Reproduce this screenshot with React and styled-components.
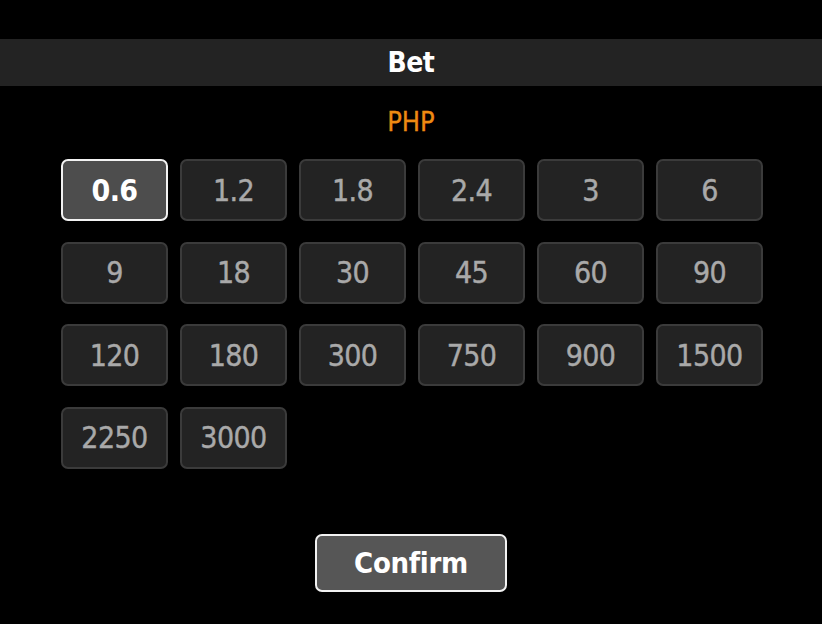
import React, { useState } from 'react';
import styled, { createGlobalStyle } from 'styled-components';

const GlobalStyle = createGlobalStyle`
  html, body {
    margin: 0;
    padding: 0;
    background: #000;
  }
  body {
    font-family: "DejaVu Sans Condensed", "DejaVu Sans", sans-serif;
  }
`;

const bets = ['0.6', '1.2', '1.8', '2.4', '3', '6', '9', '18', '30', '45', '60', '90', '120', '180', '300', '750', '900', '1500', '2250', '3000'];

const Page = styled.div`
  width: 822px;
  height: 624px;
  background: #000;
  padding-top: 39px;
  box-sizing: border-box;
  display: flex;
  flex-direction: column;
`;

const Header = styled.div`
  height: 47px;
  background: #232323;
  display: flex;
  align-items: center;
  justify-content: center;
  color: #fff;
  font-size: 28px;
  letter-spacing: -0.5px;
  font-weight: bold;
`;

const Currency = styled.div`
  margin-top: 20px;
  height: 30px;
  display: flex;
  align-items: center;
  justify-content: center;
  color: #ee8a12;
  font-size: 27px;
  -webkit-text-stroke: 0.3px currentColor;
`;

const Grid = styled.div`
  margin: 23px 0 0 61px;
  display: grid;
  grid-template-columns: repeat(6, 107px);
  grid-auto-rows: 62px;
  column-gap: 12px;
  row-gap: 20.5px;
`;

const BetButton = styled.button`
  box-sizing: border-box;
  border: 2px solid ${p => (p.$active ? '#f2f2f2' : '#3b3b3b')};
  border-radius: 7px;
  background: ${p => (p.$active ? '#4d4d4d' : '#232323')};
  color: ${p => (p.$active ? '#fff' : '#a9a9a9')};
  font-family: inherit;
  font-size: 30px;
  letter-spacing: -0.6px;
  font-weight: ${p => (p.$active ? 'bold' : 'normal')};
  -webkit-text-stroke: ${p => (p.$active ? '0' : '0.4px currentColor')};
  padding: 0;
  cursor: pointer;
`;

const Footer = styled.div`
  margin-top: 65px;
  display: flex;
  justify-content: center;
`;

const ConfirmButton = styled.button`
  box-sizing: border-box;
  width: 192px;
  height: 58px;
  border: 2px solid #f2f2f2;
  border-radius: 7px;
  background: #565656;
  color: #fff;
  font-family: inherit;
  font-size: 29px;
  letter-spacing: -0.3px;
  font-weight: bold;
  padding: 0;
  cursor: pointer;
`;

export default function App() {
  const [selected, setSelected] = useState('0.6');
  return (
    <Page>
      <GlobalStyle />
      <Header>Bet</Header>
      <Currency>PHP</Currency>
      <Grid>
        {bets.map(b => (
          <BetButton key={b} $active={b === selected} onClick={() => setSelected(b)}>
            {b}
          </BetButton>
        ))}
      </Grid>
      <Footer>
        <ConfirmButton>Confirm</ConfirmButton>
      </Footer>
    </Page>
  );
}
